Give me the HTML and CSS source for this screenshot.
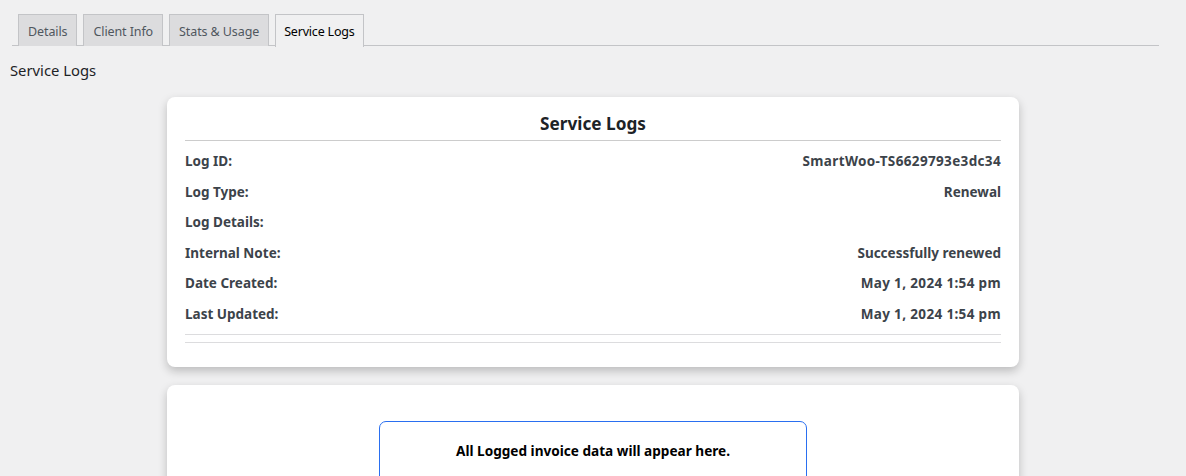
FILE: index.html
```html
<!DOCTYPE html>
<html>
<head>
<meta charset="utf-8">
<link rel="stylesheet" href="styles.css">
</head>
<body>
<header class="head">
  <nav class="tabs">
    <a class="tab">Details</a>
    <a class="tab">Client Info</a>
    <a class="tab">Stats &amp; Usage</a>
    <a class="tab active">Service Logs</a>
  </nav>
  <h2 class="page-title">Service Logs</h2>
</header>
<main class="content">
  <div class="card">
    <h3 class="card-title">Service Logs</h3>
    <div class="rows">
      <div class="row"><span>Log ID:</span><span class="val-wide">SmartWoo-TS6629793e3dc34</span></div>
      <div class="row"><span>Log Type:</span><span>Renewal</span></div>
      <div class="row"><span>Log Details:</span><span></span></div>
      <div class="row"><span>Internal Note:</span><span>Successfully renewed</span></div>
      <div class="row"><span>Date Created:</span><span class="val-wide">May 1, 2024 1:54 pm</span></div>
      <div class="row"><span>Last Updated:</span><span class="val-wide">May 1, 2024 1:54 pm</span></div>
    </div>
    <div class="rule"></div>
    <div class="rule"></div>
  </div>
  <div class="card card-invoice">
    <div class="notice">All Logged invoice data will appear here.</div>
  </div>
</main>
</body>
</html>
```
FILE: styles.css
```css
html, body {
  margin: 0;
  padding: 0;
  background: #f0f0f1;
  font-family: "Noto Sans", "Open Sans", sans-serif;
  color: #3c434a;
  overflow: hidden;
}
.head {
  padding: 14px 27px 0 12px;
}
.tabs {
  display: flex;
  gap: 6px;
  padding-left: 6px;
  border-bottom: 1px solid #c3c4c7;
  height: 31px;
}
.tab {
  box-sizing: border-box;
  height: 32px;
  padding: 2px 9px 0;
  display: flex;
  align-items: center;
  font-size: 12.5px;
  color: #50575e;
  background: #dcdcde;
  border: 1px solid #c3c4c7;
  border-bottom: none;
  letter-spacing: -0.1px;
}
.tab.active {
  background: #f0f0f1;
  color: #000;
  height: 33px;
  margin-bottom: -1px;
  padding: 1px 8px 0;
  letter-spacing: -0.2px;
}
.page-title {
  margin: 14px 0 0 -2px;
  font-size: 14.8px;
  font-weight: 400;
  color: #1d2327;
  line-height: 20px;
}
.content {
  padding-top: 17px;
}
.card {
  width: 852px;
  box-sizing: border-box;
  margin: 0 auto;
  background: #fff;
  border-radius: 8px;
  box-shadow: 0 4px 10px rgba(0, 0, 0, 0.22);
  padding: 15px 18px 24px;
}
.card-title {
  margin: 0;
  text-align: center;
  font-size: 17.2px;
  font-weight: 700;
  color: #1d2327;
  line-height: 24px;
  padding-bottom: 4px;
  border-bottom: 1px solid #ccc;
}
.rows {
  padding-top: 5px;
}
.row {
  display: flex;
  justify-content: space-between;
  font-size: 13.5px;
  font-weight: 700;
  line-height: 18.6px;
  padding: 6px 0;
  color: #3c434a;
}
.val-wide {
  letter-spacing: 0.35px;
}
.rule {
  border-top: 1px solid #dcdcde;
  margin-top: 4px;
}
.rule + .rule {
  margin-top: 7px;
}
.card-invoice {
  margin-top: 18px;
  padding: 36px 0 30px;
  height: 120px;
}
.notice {
  width: 428px;
  box-sizing: border-box;
  margin: 0 auto;
  border: 1px solid #2a6ff0;
  border-radius: 7px;
  text-align: center;
  font-size: 13.6px;
  font-weight: 700;
  color: #000;
  padding: 20px 0 40px;
  line-height: 18px;
}
```
